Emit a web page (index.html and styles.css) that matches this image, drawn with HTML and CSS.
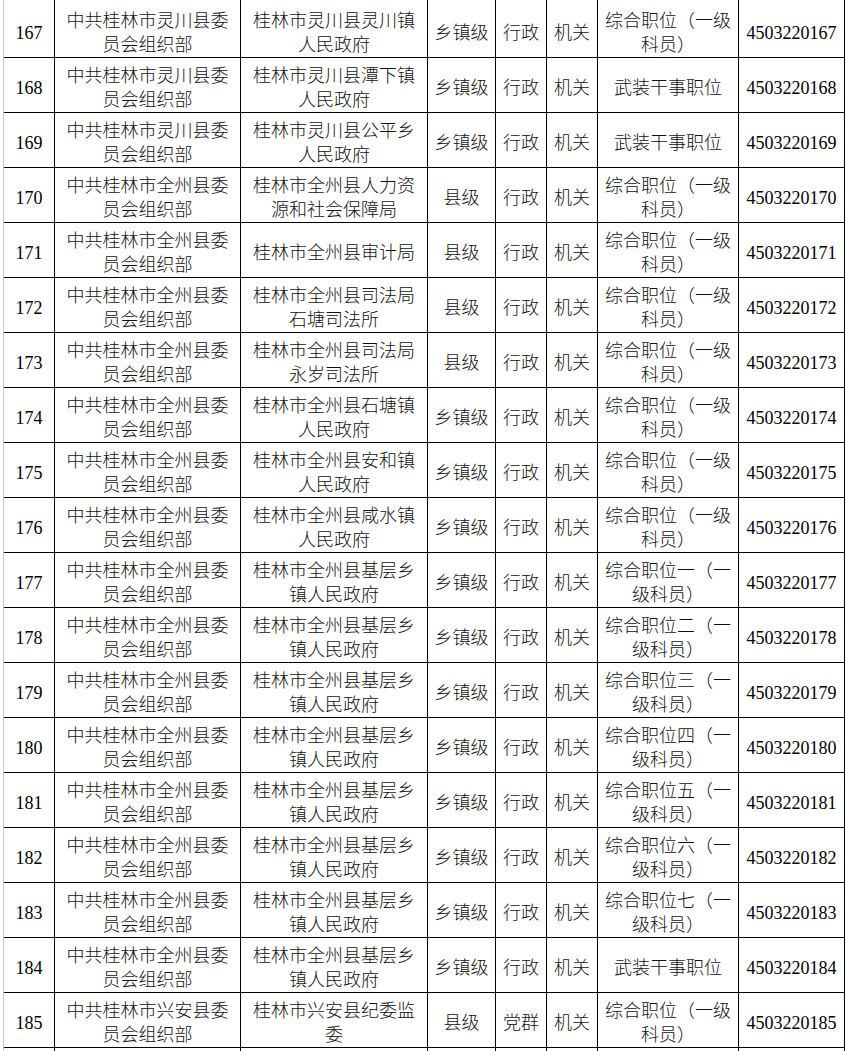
FILE: index.html
```html
<!DOCTYPE html>
<html lang="zh-CN">
<head>
<meta charset="utf-8">
<title>职位表</title>
<link rel="stylesheet" href="styles.css">
</head>
<body>
<div class="sheet">
  <div class="row first"><div class="c n">167</div><div class="c">中共桂林市灵川县委<br>员会组织部</div><div class="c">桂林市灵川县灵川镇<br>人民政府</div><div class="c">乡镇级</div><div class="c">行政</div><div class="c">机关</div><div class="c">综合职位（一级<br>科员）</div><div class="c n">4503220167</div></div>
  <div class="row"><div class="c n">168</div><div class="c">中共桂林市灵川县委<br>员会组织部</div><div class="c">桂林市灵川县潭下镇<br>人民政府</div><div class="c">乡镇级</div><div class="c">行政</div><div class="c">机关</div><div class="c">武装干事职位</div><div class="c n">4503220168</div></div>
  <div class="row"><div class="c n">169</div><div class="c">中共桂林市灵川县委<br>员会组织部</div><div class="c">桂林市灵川县公平乡<br>人民政府</div><div class="c">乡镇级</div><div class="c">行政</div><div class="c">机关</div><div class="c">武装干事职位</div><div class="c n">4503220169</div></div>
  <div class="row"><div class="c n">170</div><div class="c">中共桂林市全州县委<br>员会组织部</div><div class="c">桂林市全州县人力资<br>源和社会保障局</div><div class="c">县级</div><div class="c">行政</div><div class="c">机关</div><div class="c">综合职位（一级<br>科员）</div><div class="c n">4503220170</div></div>
  <div class="row"><div class="c n">171</div><div class="c">中共桂林市全州县委<br>员会组织部</div><div class="c">桂林市全州县审计局</div><div class="c">县级</div><div class="c">行政</div><div class="c">机关</div><div class="c">综合职位（一级<br>科员）</div><div class="c n">4503220171</div></div>
  <div class="row"><div class="c n">172</div><div class="c">中共桂林市全州县委<br>员会组织部</div><div class="c">桂林市全州县司法局<br>石塘司法所</div><div class="c">县级</div><div class="c">行政</div><div class="c">机关</div><div class="c">综合职位（一级<br>科员）</div><div class="c n">4503220172</div></div>
  <div class="row"><div class="c n">173</div><div class="c">中共桂林市全州县委<br>员会组织部</div><div class="c">桂林市全州县司法局<br>永岁司法所</div><div class="c">县级</div><div class="c">行政</div><div class="c">机关</div><div class="c">综合职位（一级<br>科员）</div><div class="c n">4503220173</div></div>
  <div class="row"><div class="c n">174</div><div class="c">中共桂林市全州县委<br>员会组织部</div><div class="c">桂林市全州县石塘镇<br>人民政府</div><div class="c">乡镇级</div><div class="c">行政</div><div class="c">机关</div><div class="c">综合职位（一级<br>科员）</div><div class="c n">4503220174</div></div>
  <div class="row"><div class="c n">175</div><div class="c">中共桂林市全州县委<br>员会组织部</div><div class="c">桂林市全州县安和镇<br>人民政府</div><div class="c">乡镇级</div><div class="c">行政</div><div class="c">机关</div><div class="c">综合职位（一级<br>科员）</div><div class="c n">4503220175</div></div>
  <div class="row"><div class="c n">176</div><div class="c">中共桂林市全州县委<br>员会组织部</div><div class="c">桂林市全州县咸水镇<br>人民政府</div><div class="c">乡镇级</div><div class="c">行政</div><div class="c">机关</div><div class="c">综合职位（一级<br>科员）</div><div class="c n">4503220176</div></div>
  <div class="row"><div class="c n">177</div><div class="c">中共桂林市全州县委<br>员会组织部</div><div class="c">桂林市全州县基层乡<br>镇人民政府</div><div class="c">乡镇级</div><div class="c">行政</div><div class="c">机关</div><div class="c">综合职位一（一<br>级科员）</div><div class="c n">4503220177</div></div>
  <div class="row"><div class="c n">178</div><div class="c">中共桂林市全州县委<br>员会组织部</div><div class="c">桂林市全州县基层乡<br>镇人民政府</div><div class="c">乡镇级</div><div class="c">行政</div><div class="c">机关</div><div class="c">综合职位二（一<br>级科员）</div><div class="c n">4503220178</div></div>
  <div class="row"><div class="c n">179</div><div class="c">中共桂林市全州县委<br>员会组织部</div><div class="c">桂林市全州县基层乡<br>镇人民政府</div><div class="c">乡镇级</div><div class="c">行政</div><div class="c">机关</div><div class="c">综合职位三（一<br>级科员）</div><div class="c n">4503220179</div></div>
  <div class="row"><div class="c n">180</div><div class="c">中共桂林市全州县委<br>员会组织部</div><div class="c">桂林市全州县基层乡<br>镇人民政府</div><div class="c">乡镇级</div><div class="c">行政</div><div class="c">机关</div><div class="c">综合职位四（一<br>级科员）</div><div class="c n">4503220180</div></div>
  <div class="row"><div class="c n">181</div><div class="c">中共桂林市全州县委<br>员会组织部</div><div class="c">桂林市全州县基层乡<br>镇人民政府</div><div class="c">乡镇级</div><div class="c">行政</div><div class="c">机关</div><div class="c">综合职位五（一<br>级科员）</div><div class="c n">4503220181</div></div>
  <div class="row"><div class="c n">182</div><div class="c">中共桂林市全州县委<br>员会组织部</div><div class="c">桂林市全州县基层乡<br>镇人民政府</div><div class="c">乡镇级</div><div class="c">行政</div><div class="c">机关</div><div class="c">综合职位六（一<br>级科员）</div><div class="c n">4503220182</div></div>
  <div class="row"><div class="c n">183</div><div class="c">中共桂林市全州县委<br>员会组织部</div><div class="c">桂林市全州县基层乡<br>镇人民政府</div><div class="c">乡镇级</div><div class="c">行政</div><div class="c">机关</div><div class="c">综合职位七（一<br>级科员）</div><div class="c n">4503220183</div></div>
  <div class="row"><div class="c n">184</div><div class="c">中共桂林市全州县委<br>员会组织部</div><div class="c">桂林市全州县基层乡<br>镇人民政府</div><div class="c">乡镇级</div><div class="c">行政</div><div class="c">机关</div><div class="c">武装干事职位</div><div class="c n">4503220184</div></div>
  <div class="row"><div class="c n">185</div><div class="c">中共桂林市兴安县委<br>员会组织部</div><div class="c">桂林市兴安县纪委监<br>委</div><div class="c">县级</div><div class="c">党群</div><div class="c">机关</div><div class="c">综合职位（一级<br>科员）</div><div class="c n">4503220185</div></div>
  <div class="row"><div class="c n"></div><div class="c"></div><div class="c"></div><div class="c"></div><div class="c"></div><div class="c"></div><div class="c"></div><div class="c n"></div></div>
</div>
</body>
</html>
```

FILE: styles.css
```css
html, body {
  margin: 0;
  padding: 0;
  background: #ffffff;
  overflow: hidden;
}

body {
  font-family: "Noto Sans CJK SC", "Liberation Serif", serif;
  font-size: 18px;
  color: #111111;
}

.sheet {
  margin-left: 3px;
  border-left: 1px solid #c9ccd8;
  width: 843px;
  height: 1051px;
  overflow: hidden;
}

.row {
  display: grid;
  grid-template-columns: 51px 186px 187px 68px 51px 51px 141px 106px;
  height: 55px;
}

.row.first {
  height: 58px;
}

.c {
  box-sizing: border-box;
  border-right: 1px solid #000000;
  border-bottom: 1px solid #000000;
  display: flex;
  align-items: center;
  justify-content: center;
  text-align: center;
  white-space: nowrap;
  line-height: 24px;
  padding-top: 2px;
  font-weight: 300;
}

.row.first .c {
  padding-top: 5px;
}

.c.n {
  font-family: "Liberation Serif", serif;
  font-size: 18px;
  font-weight: 400;
  color: #000000;
  padding-top: 6px;
}

.row.first .c.n {
  padding-top: 9px;
}
```
